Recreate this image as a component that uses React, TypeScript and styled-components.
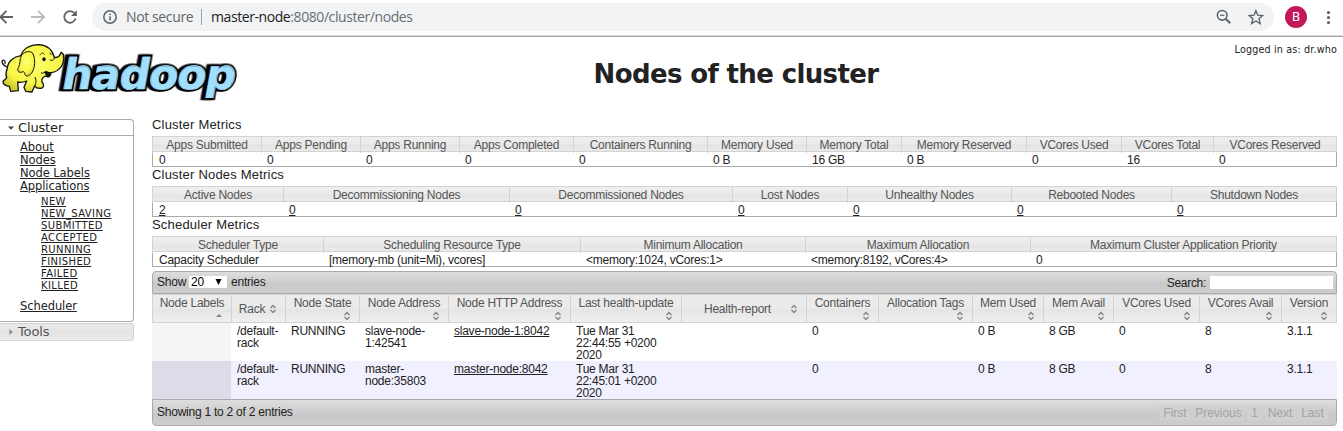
import React from 'react';
import styled, { createGlobalStyle } from 'styled-components';

const Global = createGlobalStyle`
  * { box-sizing: border-box; }
  body { margin: 0; background: #fff; color: #222; overflow: hidden; font: 12px/12px "Liberation Sans", Arial, sans-serif; }
`;

const verdana = '"DejaVu Sans", Verdana, sans-serif';

const Page = styled.div`width: 1343px; height: 431px; overflow: hidden; white-space: nowrap;`;

/* browser bar */
const BrowserBar = styled.div`
  display: flex; align-items: flex-start; height: 37px; padding-top: 3px;
  border-bottom: 1px solid #a3a3a3; box-shadow: inset 0 -1px #d9dadc;
`;
const NavIcons = styled.svg`width: 92px; height: 28px; flex: none;`;
const AddressPill = styled.div`
  display: flex; align-items: center; width: 1182px; height: 28px; padding-left: 10px;
  border-radius: 14px; background: #f1f3f4; color: #5f6368;
  font: 14px/28px "Open Sans", "Noto Sans", sans-serif;
`;
const PillIcon = styled.svg`flex: none;`;
const NotSecure = styled.span`margin-left: 8px; width: 67px; letter-spacing: -0.38px;`;
const PillDivider = styled.span`width: 1px; height: 16px; margin: 0 9px 0 8px; background: #9aa0a6;`;
const Url = styled.span`letter-spacing: -0.42px; color: #6a6e73; flex: 1;`;
const Host = styled.span`color: #202124;`;
const PillActions = styled.svg`width: 50px; height: 20px; margin-right: 9px;`;
const Avatar = styled.div`
  width: 22px; height: 22px; margin: 3px 0 0 11px; border-radius: 50%; background: #c2185b; color: #fff;
  font: 13px/22px Roboto, sans-serif; text-align: center;
`;
const MenuDots = styled.svg`margin: 5px 0 0 14px; width: 16px; height: 20px;`;

/* page header */
const Header = styled.header`display: grid; grid-template-columns: 240px 1fr 240px; height: 80px;`;
const Logo = styled.svg`width: 240px; height: 70px; margin-top: -1px;`;
const Title = styled.h1`
  margin: 21px 0 0; text-align: center; padding-left: 129px; width: 863px;
  font: bold 26px/32px ${verdana}; letter-spacing: -0.63px; color: #222;
`;
const Login = styled.div`padding: 5px 6px 0 0; text-align: right; font: 9.6px/15px ${verdana}; letter-spacing: 0.16px;`;

const Body = styled.div`display: grid; grid-template-columns: 134px 1185px; column-gap: 18px;`;

/* sidebar */
const Sidebar = styled.nav`padding-top: 2px; font-family: ${verdana};`;
const Section = styled.div<{ $open?: boolean }>`
  display: flex; align-items: center; height: ${p => (p.$open ? 17 : 18)}px; padding-left: 7px;
  border: 1px solid ${p => (p.$open ? '#aaa' : '#d3d3d3')}; border-left: 0;
  border-radius: ${p => (p.$open ? '0 4px 0 0' : '0 4px 4px 0')};
  background: ${p => (p.$open ? '#fff' : 'linear-gradient(#e9e9e9, #e3e3e3 50%, #ededed)')};
  color: ${p => (p.$open ? '#212121' : '#555')}; font-size: 13px; letter-spacing: -0.15px;
`;
const Arrow = styled.svg`width: 8px; height: 8px; margin-right: 3px;`;
const SectionBody = styled.div`
  height: 186px; margin-bottom: 1px; padding: 5px 0 0 20px; border: 1px solid #aaa; border-width: 0 1px 1px 0;
  border-radius: 0 0 4px 0;
`;
const Link = styled.a`
  display: block; font-size: 11.5px; line-height: 13px; letter-spacing: -0.08px; text-decoration: underline; color: #212121;
`;
const SubLinks = styled.div`padding: 3px 0 8px 21px;`;
const SubLink = styled(Link)`font-size: 10px; line-height: 12px; letter-spacing: 0.4px;`;

/* metric tables */
const MetricTitle = styled.div`height: 19px; font-size: 13px; line-height: 15px; letter-spacing: 0.2px;`;
const HeadRow = styled.div<{ $cols: string }>`
  display: grid; grid-template-columns: ${p => p.$cols}; height: 16px;
  border-top: 1px solid #d3d3d3; border-right: 1px solid #d3d3d3; border-bottom: 1px solid #d3d3d3;
  background: linear-gradient(#eee, #ebebeb 50%, #e5e5e5 55%, #eaeaea);
`;
const HeadCell = styled.div`border-left: 1px solid #d3d3d3; text-align: center; color: #555; line-height: 16px;`;
const ValueRow = styled.div<{ $cols: string }>`
  display: grid; grid-template-columns: ${p => p.$cols}; height: 15px;
  border: 1px solid #aaa; border-top: 0;
`;
const Value = styled.div<{ $link?: boolean }>`
  padding: 1px 0 0 5px; line-height: 15px; text-decoration: ${p => (p.$link ? 'underline' : 'none')};
  &:first-child { padding-left: 6px; }
`;
const Main = styled.main`letter-spacing: -0.24px;`;

/* nodes table */
const ToolBar = styled.div<{ $bottom?: boolean }>`
  display: flex; align-items: center; height: ${p => (p.$bottom ? 27 : 23)}px; padding: 0 3px 0 4px;
  margin-top: ${p => (p.$bottom ? 0 : 4)}px;
  border: 1px solid #aaa; border-radius: ${p => (p.$bottom ? '0 0 4px 4px' : '4px 4px 0 0')};
  background: linear-gradient(#dedede, #c9c9c9 60%, #cdcdcd);
`;
const Show = styled.div`display: flex; align-items: center; flex: 1; gap: 4px; padding-bottom: 1px;`;
const Select = styled.span`
  display: flex; align-items: center; justify-content: space-between; width: 38px; height: 12px;
  margin-left: -1px; padding: 0 5px 0 2px; background: #fff; color: #000;
`;
const SearchLabel = styled.span`margin-right: 4px; letter-spacing: -0.3px;`;
const SearchBox = styled.span`width: 123px; height: 13px; background: #fff;`;
const nodeCols = '79px 54px 74px 89px 122px 111px 125px 72px 94px 71px 70px 86px 82px 56px';
const NodeHead = styled.div`
  display: grid; grid-template-columns: ${nodeCols}; height: 29px;
`;
const NodeHeadCell = styled.div<{ $row?: boolean; $spread?: boolean }>`
  display: flex; flex-direction: ${p => (p.$row ? 'row' : 'column')}; align-items: center;
  justify-content: ${p => (p.$spread ? 'space-between' : p.$row ? 'center' : 'flex-start')};
  gap: ${p => (p.$row ? '5px' : '0')}; padding: ${p => (p.$spread ? '0 9px 0 22px' : p.$row ? '0 6px 0 4px' : '2px 0 0')};
  border: 1px solid #d3d3d3; border-right-width: 0; color: #555;
  background: linear-gradient(#ececec, #eaeaea 50%, #e4e4e4 52%, #efefef);
  &:last-child { border-right-width: 1px; }
`;
const SortIcon = styled.svg<{ $row?: boolean }>`
  width: 6px; height: 9px; ${p => (p.$row ? '' : 'align-self: flex-end; margin: 2px 9px 0 0;')}
`;
const NodeRow = styled.div<{ $even?: boolean }>`
  display: grid; grid-template-columns: ${nodeCols}; height: 38px;
  background: ${p => (p.$even ? '#f0f0ff' : '#fff')};
`;
const NodeCell = styled.div<{ $sorted?: string; $link?: boolean }>`
  padding: 2px 0 0 6px; white-space: pre-line; background: ${p => p.$sorted || 'none'};
  text-decoration: ${p => (p.$link ? 'underline' : 'none')};
`;
const Pager = styled.div`display: flex; gap: 1px; margin-right: 5px; letter-spacing: -0.05px;`;
const PagerButton = styled.span<{ $w: number }>`
  width: ${p => p.$w}px; height: 16px; border: 1px solid #cfcfcf; border-radius: 2px; background: #d0d0d0;
  color: #a2a2a2; line-height: 14px; text-align: center;
`;

const px = (w: number[]) => w.map(n => `${n}px`).join(' ');
type Metric = { title: string; widths: number[]; heads: string[]; values: string[]; link?: boolean };
const metrics: Metric[] = [
  {
    title: 'Cluster Metrics', widths: [109, 99, 99, 114, 134, 99, 95, 125, 95, 92, 123],
    heads: ['Apps Submitted', 'Apps Pending', 'Apps Running', 'Apps Completed', 'Containers Running', 'Memory Used', 'Memory Total', 'Memory Reserved', 'VCores Used', 'VCores Total', 'VCores Reserved'],
    values: ['0', '0', '0', '0', '0', '0 B', '16 GB', '0 B', '0', '16', '0'],
  },
  {
    title: 'Cluster Nodes Metrics', widths: [131, 226, 223, 115, 164, 160, 165], link: true,
    heads: ['Active Nodes', 'Decommissioning Nodes', 'Decommissioned Nodes', 'Lost Nodes', 'Unhealthy Nodes', 'Rebooted Nodes', 'Shutdown Nodes'],
    values: ['2', '0', '0', '0', '0', '0', '0'],
  },
  {
    title: 'Scheduler Metrics', widths: [171, 257, 225, 225, 306],
    heads: ['Scheduler Type', 'Scheduling Resource Type', 'Minimum Allocation', 'Maximum Allocation', 'Maximum Cluster Application Priority'],
    values: ['Capacity Scheduler', '[memory-mb (unit=Mi), vcores]', '<memory:1024, vCores:1>', '<memory:8192, vCores:4>', '0'],
  },
];
const nodeHeads = ['Node Labels', 'Rack', 'Node State', 'Node Address', 'Node HTTP Address', 'Last health-update', 'Health-report', 'Containers', 'Allocation Tags', 'Mem Used', 'Mem Avail', 'VCores Used', 'VCores Avail', 'Version'];
const nodes = [
  ['', '/default-\nrack', 'RUNNING', 'slave-node-\n1:42541', 'slave-node-1:8042', 'Tue Mar 31\n22:44:55 +0200\n2020', '', '0', '', '0 B', '8 GB', '0', '8', '3.1.1'],
  ['', '/default-\nrack', 'RUNNING', 'master-\nnode:35803', 'master-node:8042', 'Tue Mar 31\n22:45:01 +0200\n2020', '', '0', '', '0 B', '8 GB', '0', '8', '3.1.1'],
];

const Word = styled.text`
  font: bold 125px "DejaVu Sans", sans-serif; letter-spacing: -3px; fill: #a1dffe; stroke: #000;
  stroke-width: 13px; paint-order: stroke; stroke-linejoin: miter;
  filter: drop-shadow(-8px 0 0 #000);
`;
const WordFace = styled.text`
  font: bold 125px "DejaVu Sans", sans-serif; letter-spacing: -3px; fill: none; stroke: #a1dffe; stroke-width: 2px;
`;

const HadoopLogo = () => (
  <Logo viewBox="0 0 720 210">
    <defs>
      <radialGradient id="skin" cx="0.5" cy="0.4" r="0.6">
        <stop offset="0" stopColor="#ffff70" />
        <stop offset="0.7" stopColor="#f7f648" />
        <stop offset="1" stopColor="#d2ce34" />
      </radialGradient>
    </defs>
    <g transform="translate(181 159) skewX(-10) scale(1.025 1)">
      <Word>hadoop</Word>
      <WordFace aria-hidden>hadoop</WordFace>
    </g>
    <g stroke="#15150a" strokeWidth="4" strokeLinejoin="round" strokeLinecap="round" fill="url(#skin)">
      <path d="M21 93 C13 90 4 82 7 74 C11 70 17 75 15 82" fill="none" />
      <path d="M22 96 C24 76 40 62 63 59 C69 38 90 26 116 26 C142 27 157 43 163 64 C173 66 180 59 183 49 L190 55 C195 83 181 106 153 110 C154 120 145 126 136 120 C127 124 124 130 126 139 C133 145 132 154 124 157 L111 156 L104 150 L96 168 L77 166 L72 154 L80 135 C70 139 61 140 53 138 L55 164 L32 166 L28 151 C19 150 8 145 9 136 L20 126 C17 116 18 105 22 96 Z" />
      <path d="M64 59 C71 48 84 44 96 49 C106 61 106 88 99 104 C94 116 84 123 77 119 C72 115 76 104 66 108 C55 112 50 103 55 95 C62 83 58 70 64 59 Z" strokeWidth="3" />
      <path d="M151 72 C158 76 165 70 163 64 M124 111 C130 114 135 107 140 106 C145 112 149 111 153 110 M104 150 C109 140 110 131 105 124" fill="none" strokeWidth="3" />
      <path d="M135 108 C140 123 147 122 151 111 Z" fill="#221b13" />
      <path d="M120 57 C124 49 130 49 133 55 M150 51 L153 56" fill="none" strokeWidth="2.5" />
    </g>
    <ellipse cx="132" cy="70" rx="5" ry="6" fill="#111" />
  </Logo>
);

const Sort = ({ row, asc }: { row?: boolean; asc?: boolean }) => (
  <SortIcon $row={row} viewBox="0 0 6 9">
    {asc ? <path d="M0 6 L3 3 L6 6 Z" fill="#888" /> : (
      <path d="M0.5 4.1 L3 1.5 L5.5 4.1 M0.5 5.9 L3 8.5 L5.5 5.9" fill="none" stroke="#858585" strokeWidth="1.4" />
    )}
  </SortIcon>
);

export default function App() {
  return (
    <Page>
      <Global />
      <BrowserBar>
        <NavIcons viewBox="0 3 92 28" fill="none" stroke="#5f6368" strokeWidth="1.8">
          <path d="M13 17 H1 M6.5 10.8 L0.3 17 L6.5 23.2" />
          <path d="M31 17 H43.5 M38 10.8 L44.2 17 L38 23.2" stroke="#b9bbbe" />
          <path d="M74.6 13.3 A5.8 5.8 0 1 0 75.6 18.6" />
          <path d="M76.9 10.2 V16 H71.1 Z" fill="#5f6368" stroke="none" />
        </NavIcons>
        <AddressPill>
          <PillIcon width="16" height="16" viewBox="0 0 16 16" fill="none" stroke="#5f6368" strokeWidth="1.5">
            <circle cx="8" cy="8" r="6.2" /><path d="M8 7.2 V11.5 M8 4.5 V6" />
          </PillIcon>
          <NotSecure>Not secure</NotSecure>
          <PillDivider />
          <Url><Host>master-node</Host>:8080/cluster/nodes</Url>
          <PillActions viewBox="0 0 50 20" fill="none" stroke="#5f6368" strokeWidth="1.6">
            <circle cx="7.2" cy="8.3" r="4.8" /><path d="M10.6 11.7 L15.2 16.3" strokeWidth="2" /><path d="M5 8.3 H9.4" strokeWidth="1.2" />
            <path d="M40.9 3.8 L42.8 8.2 L47.6 8.6 L44 11.8 L45.1 16.5 L40.9 14 L36.7 16.5 L37.8 11.8 L34.2 8.6 L39 8.2 Z" strokeWidth="1.4" />
          </PillActions>
        </AddressPill>
        <Avatar>B</Avatar>
        <MenuDots viewBox="0 0 16 20" fill="#5f6368">
          <circle cx="7.5" cy="4.6" r="1.6" /><circle cx="7.5" cy="9.6" r="1.6" /><circle cx="7.5" cy="14.6" r="1.6" />
        </MenuDots>
      </BrowserBar>

      <Header>
        <HadoopLogo />
        <Title>Nodes of the cluster</Title>
        <Login>Logged in as: dr.who</Login>
      </Header>

      <Body>
        <Sidebar>
          <Section $open>
            <Arrow viewBox="0 0 8 8"><path d="M1 2.5 H7 L4 5.7 Z" fill="#454545" /></Arrow>Cluster
          </Section>
          <SectionBody>
            {['About', 'Nodes', 'Node Labels', 'Applications'].map(t => <Link key={t}>{t}</Link>)}
            <SubLinks>
              {['NEW', 'NEW_SAVING', 'SUBMITTED', 'ACCEPTED', 'RUNNING', 'FINISHED', 'FAILED', 'KILLED'].map(t => <SubLink key={t}>{t}</SubLink>)}
            </SubLinks>
            <Link>Scheduler</Link>
          </SectionBody>
          <Section>
            <Arrow viewBox="0 0 8 8"><path d="M2.5 1 V7 L5.7 4 Z" fill="#888" /></Arrow>Tools
          </Section>
        </Sidebar>

        <Main>
          {metrics.map(m => (
            <React.Fragment key={m.title}>
              <MetricTitle>{m.title}</MetricTitle>
              <HeadRow $cols={px(m.widths)}>{m.heads.map(h => <HeadCell key={h}>{h}</HeadCell>)}</HeadRow>
              <ValueRow $cols={px(m.widths)}>{m.values.map((v, i) => <Value key={i} $link={m.link}>{v}</Value>)}</ValueRow>
            </React.Fragment>
          ))}
          <ToolBar>
            <Show>
              <span>Show</span>
              <Select>20<svg width="7" height="6"><path d="M0.5 0 H6.5 L3.5 6 Z" /></svg></Select>
              <span>entries</span>
            </Show>
            <SearchLabel>Search:</SearchLabel>
            <SearchBox />
          </ToolBar>
          <NodeHead>
            {nodeHeads.map((h, i) => {
              const row = h === 'Rack' || h === 'Health-report';
              return (
                <NodeHeadCell key={h} $row={row} $spread={h === 'Health-report'}>
                  <span>{h}</span><Sort row={row} asc={i === 0} />
                </NodeHeadCell>
              );
            })}
          </NodeHead>
          {nodes.map((n, r) => (
            <NodeRow key={r} $even={r === 1}>
              {n.map((v, i) => (
                <NodeCell key={i} $link={i === 4} $sorted={i === 0 ? (r ? '#dcdce9' : '#f5f5f5') : undefined}>{v}</NodeCell>
              ))}
            </NodeRow>
          ))}
          <ToolBar $bottom>
            <Show>Showing 1 to 2 of 2 entries</Show>
            <Pager>
              <PagerButton $w={32}>First</PagerButton>
              <PagerButton $w={53}>Previous</PagerButton>
              <PagerButton $w={17}>1</PagerButton>
              <PagerButton $w={32}>Next</PagerButton>
              <PagerButton $w={31}>Last</PagerButton>
            </Pager>
          </ToolBar>
        </Main>
      </Body>
    </Page>
  );
}
